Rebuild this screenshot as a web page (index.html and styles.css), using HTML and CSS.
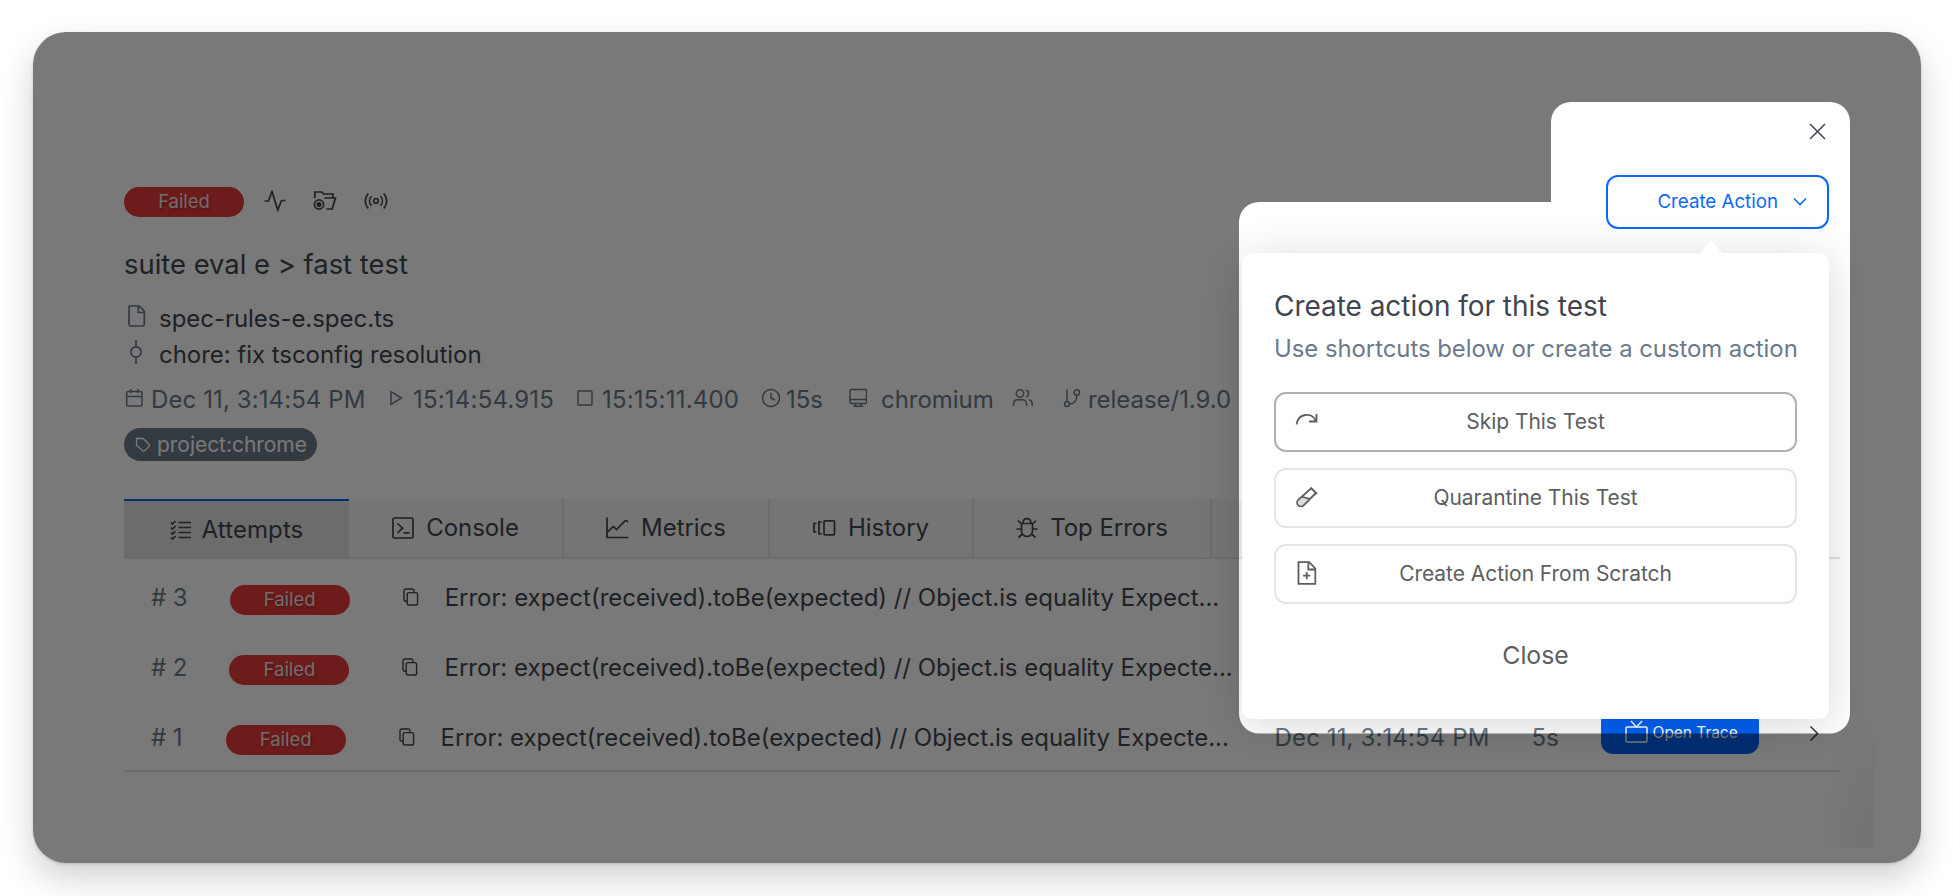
FILE: index.html
```
<!DOCTYPE html>
<html lang="en">
<head>
<meta charset="utf-8">
<title>suite eval e &gt; fast test</title>
<link rel="stylesheet" href="styles.css">
</head>
<body>
<svg class="defs" aria-hidden="true">
  <symbol id="copy" viewBox="0 0 16 18"><rect x="4.2" y="4.6" width="10.4" height="12.4" rx="1.8"/><path d="M4.2 13.2H2.8A1.8 1.8 0 0 1 1 11.4V2.8A1.8 1.8 0 0 1 2.8 1h6.4A1.8 1.8 0 0 1 11 2.8v1.8"/></symbol>
</svg>
<div class="frame">
  <main class="page">
    <div class="closebar">
      <svg class="icon x-icon" width="17" height="17" viewBox="0 0 17 17"><path d="M1 1l15 15M16 1L1 16"/></svg>
    </div>
    <header class="top">
      <span class="badge">Failed</span>
      <svg class="icon" width="22" height="22" viewBox="0 0 22 22"><path d="M.5 11h4L8 1.5l5.8 18.500L17.500 10.500h4.200"/></svg>
      <svg class="icon" width="24" height="22" viewBox="0 0 24 22"><path d="M1.800 8V2h7.200l1.600 2h9.400v4M11.500 8h11l-3.300 11h-5.700"/><circle cx="6" cy="14.500" r="4.600"/><circle class="solid" cx="6" cy="14.500" r="1.700"/></svg>
      <svg class="icon" width="24" height="22" viewBox="0 0 24 22"><circle cx="12" cy="11" r="2.300"/><path d="M4.300 3.500C.3 8 .3 14 4.300 18.500M7.500 6.200C5 9 5 13 7.500 15.800M16.500 6.200c2.500 2.800 2.500 6.800 0 9.600M19.700 3.500c4 4.500 4 10.500 0 15"/></svg>
      <button class="create">Create Action<svg width="14" height="9" viewBox="0 0 14 9"><path d="M1 1.500l6 6 6-6"/></svg></button>
    </header>
    <h1 class="title">suite eval e &gt; fast test</h1>
    <div class="line"><svg class="icon soft" width="18" height="22" viewBox="0 0 18 22"><path d="M1.700 1h9.600l5 5.300v13.200a1.500 1.500 0 0 1-1.500 1.500H2.500A1.500 1.500 0 0 1 1 19.500V2.500A1.500 1.500 0 0 1 1.700 1zM10.300 1v6.500h6"/></svg><span>spec-rules-e.spec.ts</span></div>
    <div class="line"><svg class="icon soft" width="18" height="24" viewBox="0 0 18 24"><circle cx="8" cy="12" r="5.200"/><path d="M8 0v6.800M8 17.200V24"/></svg><span>chore: fix tsconfig resolution</span></div>
    <div class="meta">
      <span class="calendar"><svg class="icon" width="20" height="20" viewBox="0 0 20 20"><rect x="2.700" y="3.500" width="15.300" height="14.500" rx="1.200"/><path d="M2.700 8.500H18M6.700 1v4M14 1v4"/></svg>Dec 11, 3:14:54 PM</span>
      <span class="start"><svg class="icon" width="20" height="20" viewBox="0 0 20 20"><path d="M4 3.500v13l10.500-6.500z"/></svg>15:14:54.915</span>
      <span class="stop"><svg class="icon" width="20" height="20" viewBox="0 0 20 20"><rect x="2" y="3" width="14" height="14" rx="1"/></svg>15:15:11.400</span>
      <span class="time"><svg class="icon thin" width="20" height="20" viewBox="0 0 20 20"><circle cx="11" cy="10" r="8.500"/><path d="M11 4.800V10l4 2"/></svg>15s</span>
      <span class="browser"><svg class="icon" width="20" height="20" viewBox="0 0 20 20"><rect x="3" y="1.500" width="16.500" height="14" rx="1.500"/><path d="M3 11.500h16.500M8.500 15.500v2.800M14 15.500v2.800M6.500 18.300h9.500"/></svg>chromium</span>
      <span class="people"><svg class="icon" width="22" height="20" viewBox="0 0 22 20"><circle cx="8" cy="5.500" r="3.700"/><path d="M1.500 18v-2.300a4 4 0 0 1 4-4h5a4 4 0 0 1 4 4V18M14 2a3.700 3.700 0 0 1 0 7M17 11.800a4 4 0 0 1 3.200 3.900V18"/></svg></span>
      <span class="branch"><svg class="icon" width="20" height="20" viewBox="0 0 20 20"><path d="M5 1.500v12M14.800 7.500c0 5-2 8.200-7.500 8.500"/><circle cx="14.800" cy="4.500" r="2.700"/><circle cx="5" cy="16" r="2.500"/></svg>release/1.9.0</span>
    </div>
    <span class="chip"><svg class="icon" width="16" height="16" viewBox="0 0 16 16"><path d="M1.500 1.500h6.800l6 6.300a1 1 0 0 1 0 1.300l-5 5a1 1 0 0 1-1.300 0L1.500 8.300z"/></svg>project:chrome</span>
    <nav class="tabs">
      <span class="tab attempts"><svg class="icon" width="22" height="20" viewBox="0 0 22 20"><path d="M8.500 2.500H21M8.500 7.500H21M8.500 12.500H21M8.500 17.500H21M1 2.500l1.500 1.500L5.500 1M1 7.500L2.500 9 5.500 6M1 12.500L2.500 14l3-3M1 17.500L2.500 19l3-3"/></svg>Attempts</span>
      <span class="tab console"><svg class="icon" width="22" height="22" viewBox="0 0 22 22"><rect x="1" y="1" width="20" height="20" rx="1.500"/><path d="M5.500 6.500l5 4.700-5 4.700M11.500 15.900h6"/></svg>Console</span>
      <span class="tab metrics"><svg class="icon" width="23" height="22" viewBox="0 0 23 22"><path d="M1 .5v20h21.500M1 15.500l6.500-6 3 3L19 4q2.500-1.500 2.500 1.500"/></svg>Metrics</span>
      <span class="tab history"><svg class="icon" width="23" height="18" viewBox="0 0 23 18"><rect x="11" y="1.800" width="10.500" height="14" rx="1"/><path d="M8.500 2.800H6v12h2.500M3.500 4.500H1v8.500h2.500"/></svg>History</span>
      <span class="tab errors"><svg class="icon" width="22" height="22" viewBox="0 0 22 22"><path d="M5.500 6.500h11v7.500a5.500 5.500 0 0 1-11 0zM7 6.500C7 0 15 0 15 6.500M.5 12h5M16.500 12h5M2 3.500l3.500 3.500M20 3.500L16.500 7M2.500 20.500l3.800-3.500M19.500 20.500L15.700 17"/></svg>Top Errors</span>
      <span class="tab more"></span>
    </nav>
    <section class="rows">
      <div class="row"><span class="num"># 3</span><span class="badge">Failed</span><svg class="icon copy" width="16" height="18"><use href="#copy"/></svg><span class="msg">Error: expect(received).toBe(expected) // Object.is equality Expect...</span></div>
      <div class="row"><span class="num"># 2</span><span class="badge">Failed</span><svg class="icon copy" width="16" height="18"><use href="#copy"/></svg><span class="msg">Error: expect(received).toBe(expected) // Object.is equality Expecte...</span></div>
      <div class="row first-attempt"><span class="num"># 1</span><span class="badge">Failed</span><svg class="icon copy" width="16" height="18"><use href="#copy"/></svg><span class="msg">Error: expect(received).toBe(expected) // Object.is equality Expecte...</span>
        <span class="date">Dec 11, 3:14:54 PM</span><span class="dur">5s</span>
        <span class="trace"><svg width="23" height="23" viewBox="0 0 23 23"><rect x="1" y="7" width="21" height="15" rx="1"/><path d="M6 1l5.500 6L17 1"/></svg>Open Trace</span>
        <svg class="icon chevron" width="11" height="17" viewBox="0 0 11 17"><path d="M1.500 1.500l7 7-7 7"/></svg>
      </div>
    </section>
  </main>

  <div class="edge"></div>

  <aside class="popover">
    <h2>Create action for this test</h2>
    <p>Use shortcuts below or create a custom action</p>
    <button class="option focused"><svg width="24" height="24" viewBox="0 0 24 24"><path d="M1.500 15.500C3 4 17 3 20.500 11.500M21.500 5v7.500H14"/></svg><span>Skip This Test</span></button>
    <button class="option"><svg width="24" height="24" viewBox="0 0 24 24"><path class="liquid" d="M6.500 11.500l9.300 1.800-6.600 6.600a4.300 4.300 0 0 1-6-6z"/><path d="M15.500 2.500l6.500 6.500M16.300 3.300L3.200 14.800a3.800 3.800 0 0 0 5.500 5.500L20.800 8M6.500 11.700l8.500 2.300"/></svg><span>Quarantine This Test</span></button>
    <button class="option"><svg width="24" height="24" viewBox="0 0 24 24"><path d="M3.500 1.200h10.800l6 6.300v15.300H3.500zM13.300 1.200v7.300h7M11.700 11v7.200M8.100 14.600h7.200"/></svg><span>Create Action From Scratch</span></button>
    <button class="dismiss">Close</button>
  </aside>

  <svg class="mask" width="1888" height="831" viewBox="0 0 1888 831"><path fill-rule="evenodd" d="M0 0H1888V831H0zM1206 190V681.500a20 20 0 0 0 20 20H1797a20 20 0 0 0 20-20V90a20 20 0 0 0-20-20H1538a20 20 0 0 0-20 20V170H1226a20 20 0 0 0-20 20z"/></svg>
</div>
</body>
</html>
```
FILE: styles.css
```
* { box-sizing: border-box; }
body {
  margin: 0;
  height: 896px;
  padding: 32px 32px 33px 33px;
  background: #fff;
  overflow: hidden;
  font-family: Inter, "Liberation Sans", sans-serif;
  font-size: 24px;
  letter-spacing: -.04px;
  color: #3f464e;
}
button { font: inherit; letter-spacing: inherit; background: #fff; }
.defs { position: absolute; width: 0; height: 0; }
.frame {
  position: relative;
  width: 1888px;
  height: 831px;
  border-radius: 33px;
  overflow: hidden;
  background: #fff;
  box-shadow: 0 15px 34px rgba(0, 0, 0, .19), 0 1px 3px rgba(0, 0, 0, .15);
}
.icon { fill: none; stroke: currentColor; stroke-width: 1.7; flex: none; }
.icon .solid { fill: currentColor; }
.thin { stroke-width: 1.4; }
.soft { color: #6b7a8a; }
.page { padding: 91px 81px 0 91px; height: 831px; }
.closebar { display: flex; justify-content: flex-end; height: 52px; padding-right: 14px; }
.x-icon { stroke-width: 1.5; }
.top { display: flex; align-items: center; height: 54px; }
.badge {
  width: 120px;
  height: 30px;
  border-radius: 15px;
  background: #e83a3a;
  color: #f4e4e4;
  font-size: 18.500px;
  line-height: 29px;
  text-align: center;
  text-shadow: 1px 2px 3px rgba(0, 0, 0, .3);
  flex: none;
}
.top .icon { margin-left: 27px; margin-top: -2px; }
.top .badge + .icon { margin-left: 20px; }
.top .create {
  display: flex;
  align-items: center;
  justify-content: flex-end;
  gap: 15px;
  width: 223px;
  height: 54px;
  margin: 0 11px 0 auto;
  padding: 0 20px 1px 0;
  border: 2px solid #0a69f5;
  border-radius: 12px;
  color: #0a69f5;
  font-size: 18.800px;
}
.create svg { fill: none; stroke: currentColor; stroke-width: 1.6; }
.title { margin: 17px 0 0; font-size: 27.400px; font-weight: 400; line-height: 36px; letter-spacing: 0; }
.line { display: flex; align-items: center; gap: 13px; height: 36px; padding-left: 4px; line-height: 36px; }
.title + .line { margin-top: 19px; }
.line .icon { margin-top: -7px; }
.meta {
  display: grid;
  grid-template-columns: 263px 189px 184px 87px 165px 50px auto;
  margin-top: 9px;
  height: 36px;
  line-height: 36px;
  color: #6b7a8a;
  white-space: nowrap;
}
.meta span { display: flex; align-items: center; gap: 6px; }
.meta .icon { margin-top: -4px; stroke-width: 1.500; }
.meta .calendar { gap: 7px; letter-spacing: .1px; }
.meta .start, .meta .stop { letter-spacing: .2px; }
.meta .browser { gap: 14px; }
.chip {
  display: flex;
  align-items: center;
  gap: 6px;
  width: 193px;
  height: 33px;
  margin-top: 10px;
  padding-left: 11px;
  border-radius: 17px;
  background: #6c7b8a;
  color: #fff;
  font-size: 21px;
}
.chip .icon { stroke-width: 1.300; }
.tabs { display: flex; height: 60px; margin-top: 38px; border-bottom: 2px solid #e3e3e3; }
.tab {
  display: flex;
  align-items: center;
  justify-content: center;
  gap: 12px;
  height: 58px;
  padding-bottom: 1px;
  border-right: 2px solid #e3e3e3;
  background: #f6f6f6;
}
.attempts { width: 225px; height: 60px; border-right: 0; border-top: 2px solid #0061f2; background: #e4e4e4; gap: 10px; letter-spacing: .1px; }
.console { width: 215px; }
.metrics { width: 206px; }
.history { width: 204px; }
.errors { width: 238px; }
.more { width: 100px; border: 0; }
.rows { height: 213px; border-bottom: 2px solid #e3e3e3; padding-top: 3px; }
.row { display: flex; align-items: center; height: 70px; padding-left: 27px; white-space: nowrap; }
.num { color: #6b7a8a; margin-right: 42px; }
.first-attempt .num { margin-right: 43px; }
.row .badge { margin-top: 6px; }
.copy { margin: -1px 26px 0 53px; stroke-width: 1.400; }
.row .msg { width: 834px; flex: none; letter-spacing: -.01px; }
.date, .dur { color: #6b7a8a; letter-spacing: .12px; }
.date { width: 257px; flex: none; }
.dur { width: 69px; flex: none; }
.trace {
  display: flex;
  align-items: center;
  gap: 5px;
  width: 158px;
  height: 44px;
  margin-top: -10px;
  padding-left: 24px;
  border-radius: 12px;
  background: #0061f2;
  color: #fff;
  font-size: 15.500px;
  flex: none;
}
.trace svg { fill: none; stroke: currentColor; stroke-width: 1.500; margin-top: -2px; }
.chevron { margin-left: 50px; margin-top: -8px; }
.edge {
  position: absolute;
  left: 1791px;
  top: 690px;
  width: 50px;
  height: 126px;
  background: radial-gradient(ellipse at 100% 100%, rgba(0, 0, 0, .055), rgba(0, 0, 0, 0) 80%);
}
.popover {
  position: absolute;
  left: 1209px;
  top: 221px;
  width: 587px;
  height: 466px;
  padding: 34px 32px 0;
  border-radius: 10px;
  background: #fff;
  box-shadow: 0 6px 46px rgba(0, 0, 0, .16);
  display: flex;
  flex-direction: column;
}
.popover::before {
  content: "";
  position: absolute;
  left: 458px;
  top: -13px;
  border: 11px solid transparent;
  border-top: 0;
  border-bottom: 13px solid #fff;
}
.popover h2 { margin: 0; font-size: 28px; font-weight: 400; line-height: 38px; letter-spacing: -.04px; }
.popover p { margin: 6px 0 0; line-height: 36px; font-size: 23.900px; color: #6b7a8a; white-space: nowrap; }
.option {
  position: relative;
  display: flex;
  align-items: center;
  height: 60px;
  margin-top: 16px;
  padding: 0 20px 2px 19px;
  border: 2px solid #e5e5e5;
  border-radius: 12px;
  font-size: 21px;
  color: #5c5e60;
}
.focused { margin-top: 25px; border-color: #adb1b6; }
.option svg { fill: none; stroke: currentColor; stroke-width: 1.800; flex: none; }
.option .liquid { fill: #dcdcdc; stroke: none; }
.option span { flex: 1; margin-right: 23px; text-align: center; }
.dismiss { border: 0; align-self: center; margin-top: 33px; padding: 0; line-height: 36px; font-size: 24.800px; color: #5c5e60; }
.mask { position: absolute; left: 0; top: 0; }
.mask path { fill: rgba(0, 0, 0, .525); }
```
